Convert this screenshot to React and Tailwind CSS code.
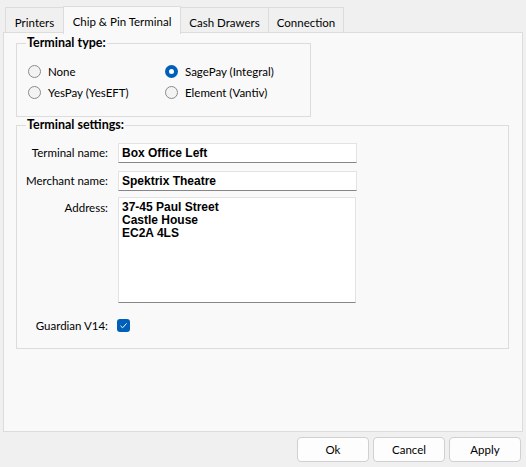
import React, { useState } from "react";

const tabs = ["Printers", "Chip & Pin Terminal", "Cash Drawers", "Connection"];
const tabWidths = ["w-[59px]", "w-[118px]", "w-[89px]", "w-[76px]"];

const Radio = ({ checked, label }) => (
  <label className="flex items-center h-[21px] gap-[7px]">
    <span
      className={
        checked
          ? "w-[13px] h-[13px] rounded-full bg-[#005fb8] flex items-center justify-center"
          : "w-[13px] h-[13px] rounded-full border border-[#8a8a8a] bg-[#f3f3f3]"
      }
    >
      {checked && <span className="w-[5px] h-[5px] rounded-full bg-white" />}
    </span>
    <span>{label}</span>
  </label>
);

const Field = ({ label, value }) => (
  <div className="flex items-center h-[28px]">
    <span className="w-[94px] text-right pr-[3px] whitespace-nowrap">{label}</span>
    <div className="ml-[7px] w-[239px] h-[20px] bg-white border border-[#e3e3e3] border-b-[#868686] flex items-center pl-[3px] font-['Liberation_Sans',sans-serif] font-bold text-[12px]">
      {value}
    </div>
  </div>
);

const Button = ({ children }) => (
  <button className="w-[72px] h-[25px] rounded-[4px] border border-[#d0d0d0] bg-[#fdfdfd]">
    {children}
  </button>
);

export default function App() {
  const [active] = useState(1);

  return (
    <div className="w-[526px] h-[467px] bg-[#f0f0f0] flex flex-col font-['Lato',sans-serif] text-[11.5px] text-black">
      <div className="flex items-end pl-[5px] h-[33px]">
        {tabs.map((t, i) =>
          i === active ? (
            <div
              key={t}
              className={`${tabWidths[i]} h-[28px] -mb-px -ml-px relative z-10 bg-[#f9f9f9] border border-[#dcdcdc] border-b-0 flex items-start justify-center pt-[6px]`}
            >
              {t}
            </div>
          ) : (
            <div
              key={t}
              className={`${tabWidths[i]} h-[26px] bg-[#f0f0f0] border border-[#dcdcdc] border-b-0 -ml-px first:ml-0 flex items-center justify-center pt-[4px]`}
            >
              {t}
            </div>
          )
        )}
      </div>

      <div className="ml-[3px] w-[520px] h-[400px] -mt-px bg-[#f9f9f9] border border-[#dcdcdc] pl-[12px] pt-[2px]">
        <fieldset className="w-[295px] h-[82px] border border-[#dcdcdc]">
          <legend className="ml-[9px] px-[1px] font-bold text-[12.5px] leading-[16px]">Terminal type:</legend>
          <div className="grid grid-cols-[137px_1fr] mt-[10px] pl-[11px]">
            <Radio label="None" />
            <Radio label="SagePay (Integral)" checked />
            <Radio label="YesPay (YesEFT)" />
            <Radio label="Element (Vantiv)" />
          </div>
        </fieldset>

        <fieldset className="w-[493px] h-[232px] border border-[#dcdcdc]">
          <legend className="ml-[9px] px-[1px] font-bold text-[12.5px] leading-[16px]">Terminal settings:</legend>
          <div className="flex flex-col pt-[6px]">
            <Field label="Terminal name:" value="Box Office Left" />
            <Field label="Merchant name:" value="Spektrix Theatre" />
            <div className="flex items-start mt-[2px]">
              <span className="w-[94px] text-right pr-[3px] pt-[2px]">Address:</span>
              <div className="ml-[7px] w-[238px] h-[106px] bg-white border border-[#e3e3e3] border-b-[#868686] pl-[3px] pt-[3px] font-['Liberation_Sans',sans-serif] font-bold text-[12px] leading-[13px]">
                <div>37-45 Paul Street</div>
                <div>Castle House</div>
                <div>EC2A 4LS</div>
              </div>
            </div>
            <div className="flex items-center mt-[14px]">
              <span className="w-[94px] text-right pr-[3px]">Guardian V14:</span>
              <span className="ml-[6px] w-[13px] h-[13px] rounded-[3px] bg-[#005fb8] flex items-center justify-center">
                <svg width="9" height="9" viewBox="0 0 9 9" fill="none">
                  <path d="M1.5 4.8 L3.6 6.8 L7.6 2.4" stroke="white" strokeWidth="1" />
                </svg>
              </span>
            </div>
          </div>
        </fieldset>
      </div>

      <div className="flex justify-end gap-[4px] pr-[5px] mt-[5px]">
        <Button>Ok</Button>
        <Button>Cancel</Button>
        <Button>Apply</Button>
      </div>
    </div>
  );
}
